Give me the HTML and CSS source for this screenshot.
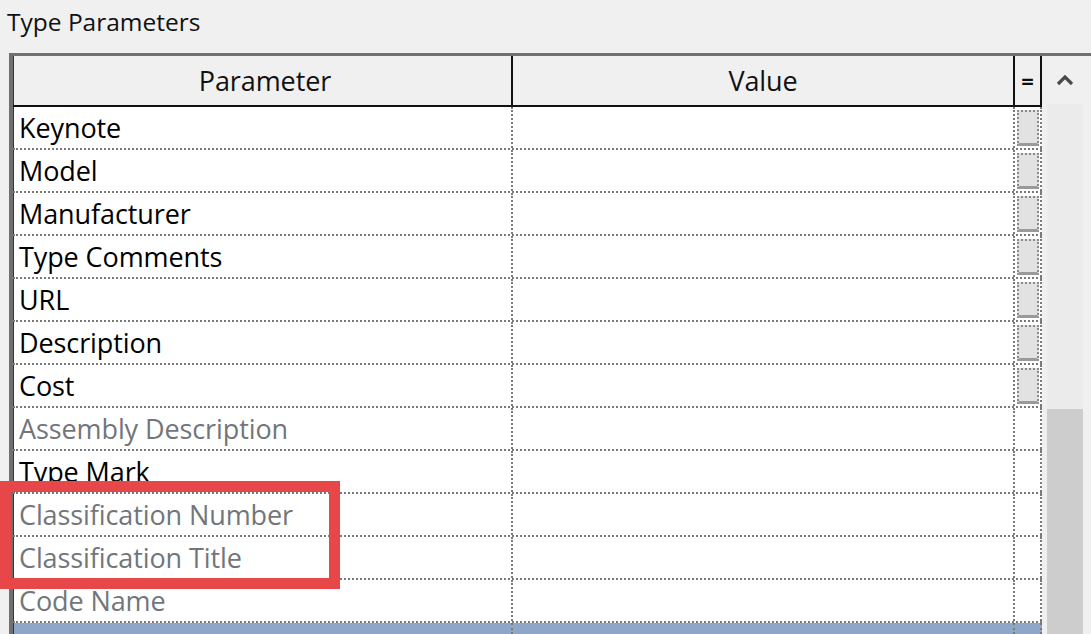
FILE: index.html
```html
<!DOCTYPE html>
<html lang="en">
<head>
  <meta charset="UTF-8" />
  <title>Type Parameters</title>
  <link rel="stylesheet" href="styles.css">
</head>
<body>

  <div class="titulo">Type Parameters</div>

  <div class="marco">
    <div class="tabla">
      <!-- CABECERA -->
      <div class="fila cabecera">
        <div class="celda param">Parameter</div>
        <div class="celda valor">Value</div>
        <div class="celda igual">=</div>
      </div>

      <div class="fila"><div class="celda param">Keynote</div><div class="celda valor"></div><div class="celda igual"><span class="boton"></span></div></div>
      <div class="fila"><div class="celda param">Model</div><div class="celda valor"></div><div class="celda igual"><span class="boton"></span></div></div>
      <div class="fila"><div class="celda param">Manufacturer</div><div class="celda valor"></div><div class="celda igual"><span class="boton"></span></div></div>
      <div class="fila"><div class="celda param">Type Comments</div><div class="celda valor"></div><div class="celda igual"><span class="boton"></span></div></div>
      <div class="fila"><div class="celda param">URL</div><div class="celda valor"></div><div class="celda igual"><span class="boton"></span></div></div>
      <div class="fila"><div class="celda param">Description</div><div class="celda valor"></div><div class="celda igual"><span class="boton"></span></div></div>
      <div class="fila"><div class="celda param">Cost</div><div class="celda valor"></div><div class="celda igual"><span class="boton"></span></div></div>
      <div class="fila gris"><div class="celda param">Assembly Description</div><div class="celda valor"></div><div class="celda igual"></div></div>
      <div class="fila"><div class="celda param">Type Mark</div><div class="celda valor"></div><div class="celda igual"></div></div>
      <div class="fila gris"><div class="celda param">Classification Number</div><div class="celda valor"></div><div class="celda igual"></div></div>
      <div class="fila gris"><div class="celda param">Classification Title</div><div class="celda valor"></div><div class="celda igual"></div></div>
      <div class="fila gris"><div class="celda param">Code Name</div><div class="celda valor"></div><div class="celda igual"></div></div>
      <div class="fila seleccion"><div class="celda param"></div><div class="celda valor"></div><div class="celda igual"></div></div>
    </div>

    <div class="scroll">
      <div class="flecha">
        <svg width="18" height="12" viewBox="0 0 18 12"><path d="M2 10 L9 3 L16 10" fill="none" stroke="#4a4a4a" stroke-width="3.2"/></svg>
      </div>
      <div class="pista"></div>
      <div class="pulgar"></div>
    </div>
  </div>

  <!-- MARCA ROJA -->
  <div class="resaltado"></div>

</body>
</html>
```

FILE: styles.css
```css
body {
  margin: 0;
  font-family: 'Open Sans', 'Noto Sans', sans-serif;
  background-color: #f0f0f0;
  color: #000;
  height: 634px;
  overflow: hidden;
}

.titulo {
  height: 53px;
  padding-left: 7px;
  font-size: 24.5px;
  line-height: 44px;
  color: #111;
}

.marco {
  display: flex;
  margin-left: 9px;
  border-top: 3px solid #707070;
  border-left: 4px solid #707070;
}

.tabla {
  width: 1029px;
  background-color: white;
}

.fila {
  display: flex;
  height: 43px;
  box-sizing: border-box;
  border-bottom: 2px dotted #7a7a7a;
}

.celda {
  box-sizing: border-box;
  font-size: 27px;
  line-height: 41px;
  white-space: nowrap;
  letter-spacing: -0.1px;
}

.param {
  width: 498px;
  padding-left: 5px;
  border-left: 1px solid #333;
}

.valor {
  width: 502px;
  border-left: 2px dotted #7a7a7a;
}

.igual {
  width: 29px;
  border-left: 2px dotted #7a7a7a;
  border-right: 2px dotted #7a7a7a;
  display: flex;
  justify-content: center;
  align-items: center;
}

.cabecera {
  height: 51px;
  background-color: #f0f0f0;
  border-bottom: 2px solid #111;
}

.cabecera .celda {
  line-height: 49px;
  text-align: center;
  color: #111;
}

.cabecera .valor,
.cabecera .igual {
  border-left: 2px solid #111;
}

.cabecera .igual {
  border-right: 2px solid #111;
  font-weight: bold;
  font-size: 22px;
}

.gris .celda {
  color: #72767b;
}

.boton {
  width: 22px;
  height: 36px;
  box-sizing: border-box;
  background-color: #e2e2e2;
  border: 2px dotted #8a8a8a;
  border-bottom: 3px solid #9a9a9a;
}

.seleccion {
  height: 11px;
  border-bottom: none;
  background-color: #8ea7c8;
}

.scroll {
  flex: 1;
  display: flex;
  flex-direction: column;
  background-color: #f0f0f0;
  padding-left: 5px;
}

.flecha {
  height: 48px;
  width: 36px;
  display: flex;
  justify-content: center;
  align-items: center;
}

.pista {
  width: 36px;
  height: 305px;
  background-color: #ebebeb;
}

.pulgar {
  width: 36px;
  height: 225px;
  background-color: #cdcdcd;
}

.resaltado {
  position: absolute;
  left: 0;
  top: 481px;
  width: 340px;
  height: 108px;
  box-sizing: border-box;
  border: 11px solid #e8474a;
}
```
